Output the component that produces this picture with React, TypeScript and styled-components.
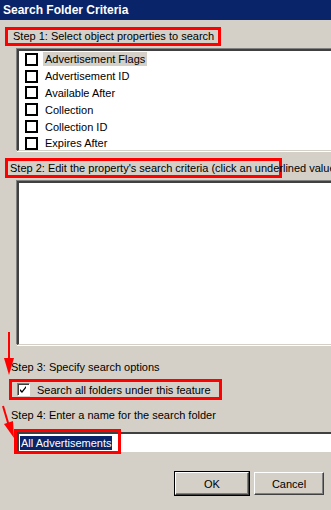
import styled, { createGlobalStyle } from 'styled-components';

const GlobalStyle = createGlobalStyle`
  html, body {
    margin: 0;
    padding: 0;
    background: #d4d0c8;
  }
  body {
    font-family: "Liberation Sans", Arial, sans-serif;
    font-size: 11px;
    color: #000;
  }
`;

const Dialog = styled.div`
  position: relative;
  width: 331px;
  height: 510px;
  overflow: hidden;
  background: #d4d0c8;
`;

const TitleBar = styled.div`
  height: 20px;
  background: #0a246a;
  color: #fff;
  font-weight: bold;
  font-size: 12px;
  line-height: 20px;
  padding-left: 3px;
`;

const Content = styled.div`
  display: flex;
  flex-direction: column;
  padding: 7px 0 0 0;
`;

const Gap = styled.div<{ $h: number }>`
  height: ${(p) => p.$h}px;
  flex: none;
`;

const StepLabel = styled.div<{ $boxed?: boolean }>`
  align-self: flex-start;
  white-space: nowrap;
  height: ${(p) => (p.$boxed ? 13 : 14)}px;
  line-height: ${(p) => (p.$boxed ? 13 : 14)}px;
  margin-left: ${(p) => (p.$boxed ? '5px' : '11px')};
  padding: ${(p) => (p.$boxed ? '0 4px 0 5px' : '0')};
  border: ${(p) => (p.$boxed ? '3px solid #ff0000' : 'none')};
`;

const ClipLabel = styled.div`
  position: relative;
  margin-left: 5px;
  height: 20px;
  width: 277px;
  box-sizing: border-box;
  border: 3px solid #ff0000;
  white-space: nowrap;
`;

const ClipText = styled.span`
  position: absolute;
  left: 2px;
  top: 0;
  line-height: 14px;
`;

const Sunken = styled.div<{ $h: number }>`
  margin-left: 17px;
  width: 330px;
  height: ${(p) => p.$h}px;
  box-sizing: border-box;
  background: #fff;
  border-top: 2px solid #404040;
  border-left: 2px solid #404040;
  border-bottom: 1px solid #d4d0c8;
  box-shadow: -1px -1px 0 #808080, 0 1px 0 #fff;
  overflow: hidden;
`;

const ListRow = styled.div`
  display: flex;
  align-items: center;
  height: 16.8px;
  padding-left: 6px;
  gap: 5px;
`;

const Box = styled.span`
  display: inline-block;
  width: 13px;
  height: 13px;
  box-sizing: border-box;
  border: 2px solid #000;
  background: #fff;
`;

const ItemText = styled.span<{ $sel?: boolean }>`
  padding: 1px 2px;
  background: ${(p) => (p.$sel ? '#d4d0c8' : 'transparent')};
`;

const OptionBox = styled.div`
  display: flex;
  align-items: center;
  gap: 7px;
  align-self: flex-start;
  margin-left: 9px;
  padding: 0 8px 0 5px;
  border: 3px solid #ff0000;
  height: 15px;
`;

const CheckBox = styled.span`
  display: inline-flex;
  align-items: center;
  justify-content: center;
  width: 13px;
  height: 13px;
  box-sizing: border-box;
  background: #fff;
  border-top: 1px solid #808080;
  border-left: 1px solid #808080;
  border-right: 1px solid #fff;
  border-bottom: 1px solid #fff;
  box-shadow: inset 1px 1px 0 #404040;
`;

const NameField = styled.div`
  position: relative;
  margin-left: 17px;
  width: 330px;
  height: 20px;
  box-sizing: border-box;
  background: #fff;
  border-top: 2px solid #404040;
  border-left: 2px solid #404040;
  display: flex;
  align-items: center;
  padding-left: 1px;
`;

const Selected = styled.span`
  background: #0a246a;
  color: #fff;
  padding: 0 1px;
  line-height: 14px;
`;

const FieldMark = styled.div`
  position: absolute;
  left: -5px;
  top: -5px;
  width: 107px;
  height: 25px;
  border: 3px solid #ff0000;
  box-sizing: border-box;
`;

const Buttons = styled.div`
  display: flex;
  justify-content: flex-end;
  gap: 5px;
  padding-right: 7px;
  margin-top: 20px;
`;

const Button = styled.button<{ $default?: boolean }>`
  width: ${(p) => (p.$default ? 74 : 70)}px;
  height: 23px;
  font-family: inherit;
  font-size: 11px;
  color: #000;
  background: #d4d0c8;
  border-top: 1px solid #fff;
  border-left: 1px solid #fff;
  border-right: 1px solid #404040;
  border-bottom: 1px solid #404040;
  box-shadow: inset -1px -1px 0 #808080;
  outline: ${(p) => (p.$default ? '1px solid #000' : 'none')};
  padding: 0;
`;

const Arrows = styled.svg`
  position: absolute;
  left: 0;
  top: 0;
  pointer-events: none;
`;

const items = [
  'Advertisement Flags',
  'Advertisement ID',
  'Available After',
  'Collection',
  'Collection ID',
  'Expires After',
];

export default function App() {
  return (
    <Dialog>
      <GlobalStyle />
      <TitleBar>Search Folder Criteria</TitleBar>
      <Content>
        <StepLabel $boxed>Step 1: Select object properties to search</StepLabel>
        <Gap $h={3} />
        <Sunken $h={102}>
          {items.map((it, i) => (
            <ListRow key={it}>
              <Box />
              <ItemText $sel={i === 0}>{it}</ItemText>
            </ListRow>
          ))}
        </Sunken>
        <Gap $h={7} />
        <ClipLabel>
          <ClipText>Step 2: Edit the property's search criteria (click an underlined value</ClipText>
        </ClipLabel>
        <Gap $h={3} />
        <Sunken $h={164} />
        <Gap $h={15} />
        <StepLabel>Step 3: Specify search options</StepLabel>
        <Gap $h={5} />
        <OptionBox>
          <CheckBox>
            <svg width="9" height="9" viewBox="0 0 9 9">
              <path d="M1 4 L3 6 L7 1 L7 3 L3 8 L1 6 Z" fill="#000" />
            </svg>
          </CheckBox>
          <span>Search all folders under this feature</span>
        </OptionBox>
        <Gap $h={8} />
        <StepLabel>Step 4: Enter a name for the search folder</StepLabel>
        <Gap $h={10} />
        <NameField>
          <FieldMark />
          <Selected>All Advertisements</Selected>
        </NameField>
        <Buttons>
          <Button $default>OK</Button>
          <Button>Cancel</Button>
        </Buttons>
      </Content>
      <Arrows width="331" height="510" viewBox="0 0 331 510">
        <line x1="9" y1="332" x2="9" y2="360" stroke="#ff0000" strokeWidth="2" />
        <polygon points="4,358 14,358 9,375" fill="#ff0000" />
        <line x1="3" y1="406" x2="9" y2="426" stroke="#ff0000" strokeWidth="2" />
        <polygon points="4,424 13,421 14,438" fill="#ff0000" />
      </Arrows>
    </Dialog>
  );
}
